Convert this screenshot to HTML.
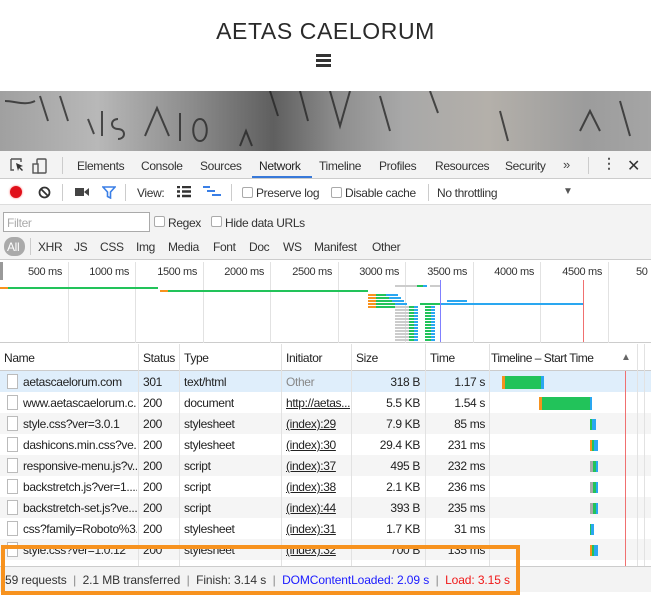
<!DOCTYPE html>
<html><head><meta charset="utf-8"><style>
*{margin:0;padding:0;box-sizing:border-box}
body{width:651px;height:592px;overflow:hidden;position:relative;font-family:"Liberation Sans",Arial,sans-serif;font-size:12px;letter-spacing:-0.35px;color:#222;background:#fff}
.a{position:absolute}
.t{position:absolute;white-space:nowrap}
.cb{position:absolute;width:11px;height:11px;border:1px solid #aaa;border-radius:2px;background:#fff}
.vl{position:absolute;width:1px;background:#e2e2e2}
.row{position:absolute;left:0;width:651px;height:21px}
.row span{position:absolute;top:4px;white-space:nowrap;overflow:hidden}
.doc{position:absolute;left:7px;top:3px;width:11px;height:15px;border:1px solid #bbb;background:#fff}
u{text-decoration:underline}
</style></head><body>
<div class="t" style="left:0;width:651px;text-align:center;top:18px;font-size:23px;letter-spacing:0.6px;color:#2a2a2a">AETAS CAELORUM</div>
<div class="a" style="left:316px;top:54px;width:15px;height:3px;background:#333"></div>
<div class="a" style="left:316px;top:59px;width:15px;height:3px;background:#333"></div>
<div class="a" style="left:316px;top:64px;width:15px;height:3px;background:#333"></div>
<div class="a" style="left:0;top:91px;width:651px;height:60px;background:linear-gradient(90deg,#a0a0a0,#b8b8b8 15%,#8a8a8a 30%,#5f5f5f 42%,#8e8e8e 52%,#a8a8a8 62%,#b4b0aa 75%,#9c9c9c 90%,#a5a5a5)"></div>
<svg class="a" style="left:0;top:91px" width="651" height="60"><g stroke="#222" stroke-width="2" fill="none" opacity=".75"><path d="M5 10c10 0 20 5 30 0M40 5l8 25M60 5l8 25M88 28l6 15M102 20v25M118 28c-8 0-8 10 0 10s8 10 0 10M145 45l12-28 12 28M180 22v28M200 28c-9 0-9 22 0 22s9-22 0-22M240 55l6-15 6 15M270 0l8 25M300 0l8 30M330 0l10 35 10-35M380 5l10 35M430 0l8 22M500 20l8 30M580 40l10-20 10 20M620 10l10 35"/></g></svg>
<div class="a" style="left:0;top:151px;width:651px;height:28px;background:#f3f3f3;border-bottom:1px solid #ccc"></div>
<svg class="a" style="left:10px;top:158px" width="40" height="16"><path d="M1 1h10v3M1 1v11h3" stroke="#555" fill="none" stroke-width="1.4"/><path d="M6 5l7 3-3 1 3 3-1 1-3-3-1 3z" fill="#333"/><rect x="27" y="1" width="9" height="14" rx="1" stroke="#555" fill="none" stroke-width="1.4"/><rect x="23" y="6" width="5" height="9" stroke="#555" fill="#f3f3f3" stroke-width="1.4"/></svg>
<div class="vl" style="left:62px;top:157px;height:17px;background:#ccc"></div>
<div class="t" style="left:77px;top:159px;color:#333">Elements</div>
<div class="t" style="left:141px;top:159px;color:#333">Console</div>
<div class="t" style="left:200px;top:159px;color:#333">Sources</div>
<div class="t" style="left:259px;top:159px;color:#222">Network</div>
<div class="a" style="left:252px;top:176px;width:60px;height:2px;background:#3879d9"></div>
<div class="t" style="left:319px;top:159px;color:#333">Timeline</div>
<div class="t" style="left:379px;top:159px;color:#333">Profiles</div>
<div class="t" style="left:435px;top:159px;color:#333">Resources</div>
<div class="t" style="left:505px;top:159px;color:#333">Security</div>
<div class="t" style="left:563px;top:157px;color:#444;font-size:13px">»</div>
<div class="vl" style="left:588px;top:157px;height:17px;background:#ccc"></div>
<div class="t" style="left:602px;top:155px;font-size:14px;font-weight:bold;color:#555">⋮</div>
<div class="t" style="left:627px;top:156px;font-size:16px;color:#333">✕</div>
<div class="a" style="left:0;top:179px;width:651px;height:26px;background:#fff;border-bottom:1px solid #ddd"></div>
<div class="a" style="left:10px;top:186px;width:12px;height:12px;border-radius:50%;background:#e0101a;box-shadow:0 0 2px #f66"></div>
<svg class="a" style="left:38px;top:186px" width="13" height="13"><circle cx="6.5" cy="6.5" r="5" stroke="#333" stroke-width="1.8" fill="none"/><path d="M3 3l7 7" stroke="#333" stroke-width="1.8"/></svg>
<div class="vl" style="left:62px;top:184px;height:17px;background:#ccc"></div>
<svg class="a" style="left:75px;top:187px" width="14" height="10"><rect x="0" y="1" width="9" height="8" fill="#444"/><path d="M9 5l5-4v8z" fill="#444"/></svg>
<svg class="a" style="left:102px;top:186px" width="14" height="13"><path d="M1 1h12l-4.5 5v6l-3-1.5v-4.5z" fill="none" stroke="#3a7fe6" stroke-width="1.6"/></svg>
<div class="vl" style="left:125px;top:184px;height:17px;background:#ccc"></div>
<div class="t" style="left:137px;top:186px;color:#333">View:</div>
<svg class="a" style="left:177px;top:186px" width="14" height="12"><path d="M0 1h3M5 1h9M0 5.5h3M5 5.5h9M0 10h3M5 10h9" stroke="#333" stroke-width="2.4"/></svg>
<svg class="a" style="left:203px;top:186px" width="18" height="12"><path d="M0 1h7M4 5h8M9 9h9" stroke="#3a7fe6" stroke-width="2"/></svg>
<div class="vl" style="left:231px;top:184px;height:17px;background:#ccc"></div>
<div class="cb" style="left:242px;top:187px"></div>
<div class="t" style="left:256px;top:186px;color:#333">Preserve log</div>
<div class="cb" style="left:331px;top:187px"></div>
<div class="t" style="left:345px;top:186px;color:#333">Disable cache</div>
<div class="vl" style="left:428px;top:184px;height:17px;background:#ccc"></div>
<div class="t" style="left:437px;top:186px;color:#333">No throttling</div>
<div class="t" style="left:563px;top:186px;color:#555;font-size:10px">▼</div>
<div class="a" style="left:0;top:205px;width:651px;height:55px;background:#f3f3f3;border-bottom:1px solid #ccc"></div>
<div class="a" style="left:3px;top:212px;width:147px;height:20px;border:1px solid #aaa;background:#fff"></div>
<div class="t" style="left:7px;top:216px;color:#aaa">Filter</div>
<div class="cb" style="left:154px;top:216px"></div>
<div class="t" style="left:168px;top:216px;color:#333">Regex</div>
<div class="cb" style="left:211px;top:216px"></div>
<div class="t" style="left:225px;top:216px;color:#333">Hide data URLs</div>
<div class="a" style="left:4px;top:237px;width:21px;height:19px;border-radius:9px;background:#aaa"></div>
<div class="t" style="left:7px;top:240px;color:#fff">All</div>
<div class="vl" style="left:30px;top:238px;height:17px;background:#ccc"></div>
<div class="t" style="left:38px;top:240px;color:#333">XHR</div>
<div class="t" style="left:74px;top:240px;color:#333">JS</div>
<div class="t" style="left:100px;top:240px;color:#333">CSS</div>
<div class="t" style="left:136px;top:240px;color:#333">Img</div>
<div class="t" style="left:168px;top:240px;color:#333">Media</div>
<div class="t" style="left:213px;top:240px;color:#333">Font</div>
<div class="t" style="left:249px;top:240px;color:#333">Doc</div>
<div class="t" style="left:283px;top:240px;color:#333">WS</div>
<div class="t" style="left:314px;top:240px;color:#333">Manifest</div>
<div class="t" style="left:372px;top:240px;color:#333">Other</div>
<div class="a" style="left:0;top:261px;width:651px;height:82px;background:#fff;border-bottom:1px solid #ccc"></div>
<div class="a" style="left:0;top:262px;width:3px;height:18px;background:#999"></div>
<div id="ov"></div>
<div class="a" style="left:0;top:344px;width:651px;height:27px;background:#fff;border-bottom:1px solid #ccc"></div>
<div class="t" style="left:4px;top:351px">Name</div>
<div class="t" style="left:143px;top:351px">Status</div>
<div class="t" style="left:184px;top:351px">Type</div>
<div class="t" style="left:286px;top:351px">Initiator</div>
<div class="t" style="left:356px;top:351px">Size</div>
<div class="t" style="left:430px;top:351px">Time</div>
<div class="t" style="left:491px;top:351px;letter-spacing:-0.5px">Timeline – Start Time</div>
<div class="t" style="left:621px;top:352px;font-size:10px;color:#666">▲</div>
<div id="rows"></div>
<div class="vl" style="left:138px;top:344px;height:222px"></div>
<div class="vl" style="left:179px;top:344px;height:222px"></div>
<div class="vl" style="left:281px;top:344px;height:222px"></div>
<div class="vl" style="left:351px;top:344px;height:222px"></div>
<div class="vl" style="left:425px;top:344px;height:222px"></div>
<div class="vl" style="left:489px;top:344px;height:222px"></div>
<div class="vl" style="left:637px;top:344px;height:222px"></div>
<div class="vl" style="left:644px;top:344px;height:222px"></div>
<div class="a" style="left:625px;top:371px;width:1px;height:195px;background:#f07070"></div>
<div class="a" style="left:0;top:566px;width:651px;height:26px;background:#f3f3f3;border-top:1px solid #ccc"></div>
<div class="t" style="left:5px;top:573px;color:#333;letter-spacing:-0.1px">59 requests &nbsp;<span style="color:#888">|</span>&nbsp; 2.1 MB transferred &nbsp;<span style="color:#888">|</span>&nbsp; Finish: 3.14 s &nbsp;<span style="color:#888">|</span>&nbsp; <span style="color:#1a1aff">DOMContentLoaded: 2.09 s</span> &nbsp;<span style="color:#888">|</span>&nbsp; <span style="color:#f01818">Load: 3.15 s</span></div>
<div class="a" style="left:1px;top:545px;width:519px;height:50px;border:4px solid #f7921e"></div>
<script>
var ov=document.getElementById('ov'),h='';
var labels=['500 ms','1000 ms','1500 ms','2000 ms','2500 ms','3000 ms','3500 ms','4000 ms','4500 ms','50'];
for(var i=0;i<10;i++){var x=67.5*(i+1);h+='<div class="vl" style="left:'+Math.round(x)+'px;top:262px;height:81px"></div>';
if(i<9)h+='<div class="t" style="left:'+Math.round(x-52)+'px;width:46px;text-align:right;top:266px;font-size:11px;color:#333">'+labels[i]+'</div>';
else h+='<div class="t" style="left:636px;top:266px;font-size:11px;color:#333">50</div>';}
function b(x,y,w,c){h+='<div class="a" style="left:'+x+'px;top:'+y+'px;width:'+w+'px;height:2px;background:'+c+'"></div>';}
b(0,287,8,'#f7921e');b(8,287,150,'#22c35a');b(160,290,8,'#f7921e');b(168,290,200,'#22c35a');
b(395,285,22,'#ccc');b(417,285,6,'#22c35a');b(423,285,4,'#2aa7f0');b(430,285,10,'#ccc');
for(var k=0;k<5;k++){var y=294+k*3;b(368,y,8,'#f7921e');b(376,y,10+k*3,'#22c35a');b(386+k*3,y,12,'#2aa7f0');}
b(420,303,20,'#22c35a');b(440,303,80,'#2aa7f0');b(520,303,63,'#2aa7f0');b(447,300,20,'#2aa7f0');
for(var k=0;k<12;k++){var y=306+k*3;b(395,y,14,'#ccc');b(409,y,5,'#22c35a');b(414,y,4,'#2aa7f0');b(425,y,6,'#22c35a');b(431,y,4,'#2aa7f0');}
h+='<div class="a" style="left:440px;top:280px;width:1px;height:62px;background:#8080ff"></div>';
h+='<div class="a" style="left:583px;top:280px;width:1px;height:62px;background:#f07070"></div>';
ov.innerHTML=h;
var R=[['aetascaelorum.com','301','text/html','Other','318 B','1.17 s',[502,3,505,36,541,3]],
['www.aetascaelorum.c...','200','document','http://aetas...','5.5 KB','1.54 s',[539,3,542,48,590,2]],
['style.css?ver=3.0.1','200','stylesheet','(index):29','7.9 KB','85 ms',[0,0,590,2,592,4]],
['dashicons.min.css?ve...','200','stylesheet','(index):30','29.4 KB','231 ms',[590,2,592,2,594,4]],
['responsive-menu.js?v...','200','script','(index):37','495 B','232 ms',[590,3,593,3,596,2]],
['backstretch.js?ver=1....','200','script','(index):38','2.1 KB','236 ms',[590,3,593,3,596,2]],
['backstretch-set.js?ve...','200','script','(index):44','393 B','235 ms',[590,3,593,3,596,2]],
['css?family=Roboto%3...','200','stylesheet','(index):31','1.7 KB','31 ms',[0,0,590,1,591,3]],
['style.css?ver=1.0.12','200','stylesheet','(index):32','700 B','135 ms',[590,2,592,2,594,4]]];
var g='';
for(var i=0;i<R.length;i++){var r=R[i],y=371+i*21,bg=i==0?'#dfeefb':(i%2?'#fff':'#f5f5f5');
g+='<div class="row" style="top:'+y+'px;background:'+bg+'"><div class="doc"></div><span style="left:23px;width:114px">'+r[0]+'</span><span style="left:143px">'+r[1]+'</span><span style="left:184px">'+r[2]+'</span><span style="left:286px;width:64px;'+(i==0?'color:#888':'')+'">'+(i==0?r[3]:'<u>'+r[3]+'</u>')+'</span><span style="right:'+(651-420)+'px">'+r[4]+'</span><span style="right:'+(651-485)+'px">'+r[5]+'</span>';
var t=r[6],cs=i>=4&&i<=6?['#aaa','#22c35a','#2aa7f0']:['#f7921e','#22c35a','#2aa7f0'];
for(var j=0;j<3;j++){if(t[j*2+1])g+='<div class="a" style="left:'+t[j*2]+'px;top:'+(i<2?5:6)+'px;width:'+t[j*2+1]+'px;height:'+(i<2?13:11)+'px;background:'+cs[j]+'"></div>';}
g+='</div>';}
g+='<div class="row" style="top:560px;background:#fff;height:6px"></div>';
document.getElementById('rows').innerHTML=g;
</script>
</body></html>
